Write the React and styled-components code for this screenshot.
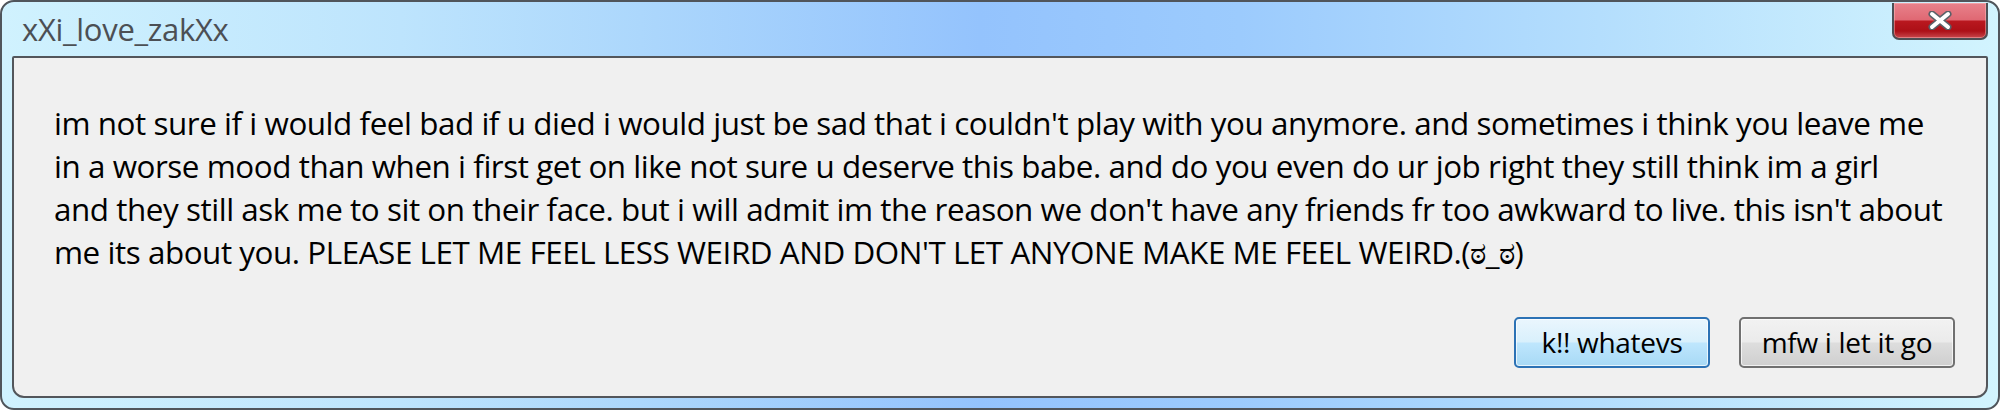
import React from 'react';
import styled, { createGlobalStyle } from 'styled-components';

const GlobalStyle = createGlobalStyle`
  html, body {
    margin: 0;
    padding: 0;
    background: #ffffff;
  }
  body {
    font-family: "Open Sans", "Noto Sans", "Liberation Sans", sans-serif;
  }
`;

// Window frame
const Window = styled.div`
  box-sizing: border-box;
  width: 2000px;
  height: 410px;
  border: 2px solid #50555b;
  border-radius: 14px;
  background: linear-gradient(
    90deg,
    #d0f2fe 0%,
    #bde4fd 20%,
    #acd7fc 32%,
    #94c3fd 49%,
    #9ccbfd 62%,
    #b4defd 80%,
    #d2f4fe 100%
  );
  display: flex;
  flex-direction: column;
  overflow: hidden;
`;

const TitleBar = styled.div`
  height: 54px;
  display: flex;
  align-items: flex-start;
  justify-content: space-between;
  padding-left: 20px;
  padding-right: 10px;
  flex-shrink: 0;
`;

const Title = styled.div`
  font-size: 31px;
  color: #4c4f54;
  line-height: 54px;
  letter-spacing: -0.3px;
`;

const CloseButton = styled.div`
  box-sizing: border-box;
  width: 96px;
  height: 37px;
  margin-top: 1px;
  border: 2px solid #4d4f54;
  border-top: none;
  border-radius: 0 0 7px 7px;
  background: linear-gradient(
    180deg,
    #e8828c 0%,
    #e06873 48%,
    #b9181f 52%,
    #ac1017 80%,
    #c8474c 100%
  );
  box-shadow: inset 0 0 0 1px rgba(255, 200, 200, 0.45);
  display: flex;
  align-items: center;
  justify-content: center;
`;

const Panel = styled.div`
  box-sizing: border-box;
  flex: 1;
  margin: 0 10px 10px 10px;
  border: 2px solid #53565b;
  border-radius: 2px 2px 12px 12px;
  background: #f0f0f0;
  display: flex;
  flex-direction: column;
  justify-content: space-between;
  padding: 43px 31px 28px 40px;
`;

const Message = styled.div`
  font-size: 31.4px;
  line-height: 43px;
  color: #000;
  letter-spacing: -0.45px;
`;

const Line = styled.span`
  display: block;
  white-space: nowrap;
`;

const ButtonRow = styled.div`
  display: flex;
  justify-content: flex-end;
  gap: 29px;
`;

const Button = styled.button`
  box-sizing: border-box;
  width: ${({ w }) => w}px;
  height: 51px;
  border-radius: 5px;
  font-family: inherit;
  font-size: 28px;
  letter-spacing: -0.3px;
  color: #000;
  padding: 0 0 2px 0;
  border: 2px solid ${({ primary }) => (primary ? '#2c72b5' : '#707070')};
  background: ${({ primary }) =>
    primary
      ? 'linear-gradient(180deg, #eaf6fd 0%, #d9f0fc 48%, #bee6fd 52%, #a7d9f5 100%)'
      : 'linear-gradient(180deg, #f2f2f2 0%, #ebebeb 48%, #dddddd 52%, #cfcfcf 100%)'};
  box-shadow: inset 0 0 0 1px rgba(255, 255, 255, 0.7);
`;

const lines = [
  "im not sure if i would feel bad if u died i would just be sad that i couldn't play with you anymore. and sometimes i think you leave me",
  'in a worse mood than when i first get on like not sure u deserve this babe. and do you even do ur job right they still think im a girl',
  "and they still ask me to sit on their face. but i will admit im the reason we don't have any friends fr too awkward to live. this isn't about",
  "me its about you. PLEASE LET ME FEEL LESS WEIRD AND DON'T LET ANYONE MAKE ME FEEL WEIRD.(ಠ_ಠ)",
];

export default function App() {
  return (
    <>
      <GlobalStyle />
      <Window>
        <TitleBar>
          <Title>xXi_love_zakXx</Title>
          <CloseButton>
            <svg width="24" height="19" viewBox="0 0 24 19">
              <path d="M4 3 L20 16 M20 3 L4 16" stroke="#5b6068" strokeWidth="7" strokeLinecap="round" />
              <path d="M4 3 L20 16 M20 3 L4 16" stroke="#ffffff" strokeWidth="4" strokeLinecap="round" />
            </svg>
          </CloseButton>
        </TitleBar>
        <Panel>
          <Message>
            {lines.map((l, i) => (
              <Line key={i}>{l}</Line>
            ))}
          </Message>
          <ButtonRow>
            <Button primary w={196}>k!! whatevs</Button>
            <Button w={216}>mfw i let it go</Button>
          </ButtonRow>
        </Panel>
      </Window>
    </>
  );
}
